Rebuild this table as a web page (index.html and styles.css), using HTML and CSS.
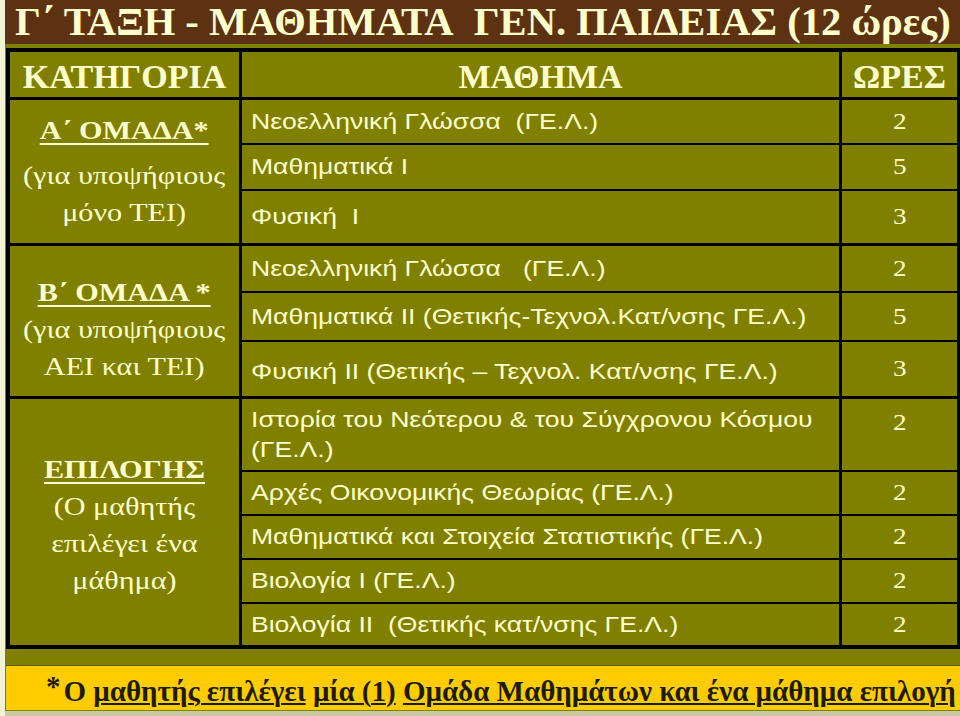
FILE: index.html
```html
<!DOCTYPE html>
<html lang="el">
<head>
<meta charset="utf-8">
<title>Γ΄ ΤΑΞΗ - ΜΑΘΗΜΑΤΑ ΓΕΝ. ΠΑΙΔΕΙΑΣ</title>
<link rel="stylesheet" href="styles.css">
</head>
<body>
<div class="slide">
  <div class="title">Γ΄ ΤΑΞΗ - ΜΑΘΗΜΑΤΑ&nbsp; ΓΕΝ. ΠΑΙΔΕΙΑΣ (12 ώρες)</div>
  <div class="main">
    <div class="table">
      <div class="group head">
        <div class="cell hcell">ΚΑΤΗΓΟΡΙΑ</div>
        <div class="cell hcell">ΜΑΘΗΜΑ</div>
        <div class="cell hcell">ΩΡΕΣ</div>
      </div>
      <div class="group ga">
        <div class="cell cat cat-a"><span class="wide"><span class="cat-title">Α΄ ΟΜΑΔΑ*</span><br><span class="cat-sub">(για υποψήφιους<br>μόνο ΤΕΙ)</span></span></div>
        <div class="cell lesson"><span class="wide">Νεοελληνική Γλώσσα&nbsp; (ΓΕ.Λ.)</span></div>
        <div class="cell hours"><span class="wide">2</span></div>
        <div class="cell lesson"><span class="wide">Μαθηματικά Ι</span></div>
        <div class="cell hours"><span class="wide">5</span></div>
        <div class="cell lesson"><span class="wide">Φυσική&nbsp; Ι</span></div>
        <div class="cell hours"><span class="wide">3</span></div>
      </div>
      <div class="group gb">
        <div class="cell cat cat-b"><span class="wide"><span class="cat-title">Β΄ ΟΜΑΔΑ *</span><br><span class="cat-sub">(για υποψήφιους<br>ΑΕΙ και ΤΕΙ)</span></span></div>
        <div class="cell lesson"><span class="wide">Νεοελληνική Γλώσσα&nbsp;&nbsp; (ΓΕ.Λ.)</span></div>
        <div class="cell hours"><span class="wide">2</span></div>
        <div class="cell lesson"><span class="wide">Μαθηματικά ΙΙ (Θετικής-Τεχνολ.Κατ/νσης ΓΕ.Λ.)</span></div>
        <div class="cell hours"><span class="wide">5</span></div>
        <div class="cell lesson low"><span class="wide">Φυσική ΙΙ (Θετικής – Τεχνολ. Κατ/νσης ΓΕ.Λ.)</span></div>
        <div class="cell hours"><span class="wide">3</span></div>
      </div>
      <div class="group ge">
        <div class="cell cat cat-e"><span class="wide"><span class="cat-title">ΕΠΙΛΟΓΗΣ</span><br><span class="cat-sub">(Ο μαθητής<br>επιλέγει ένα<br>μάθημα)</span></span></div>
        <div class="cell lesson"><span class="wide">Ιστορία του Νεότερου &amp; του Σύγχρονου Κόσμου<br>(ΓΕ.Λ.)</span></div>
        <div class="cell hours top"><span class="wide">2</span></div>
        <div class="cell lesson"><span class="wide">Αρχές Οικονομικής Θεωρίας (ΓΕ.Λ.)</span></div>
        <div class="cell hours"><span class="wide">2</span></div>
        <div class="cell lesson"><span class="wide">Μαθηματικά και Στοιχεία Στατιστικής (ΓΕ.Λ.)</span></div>
        <div class="cell hours"><span class="wide">2</span></div>
        <div class="cell lesson"><span class="wide">Βιολογία Ι (ΓΕ.Λ.)</span></div>
        <div class="cell hours"><span class="wide">2</span></div>
        <div class="cell lesson"><span class="wide">Βιολογία ΙΙ&nbsp; (Θετικής κατ/νσης ΓΕ.Λ.)</span></div>
        <div class="cell hours"><span class="wide">2</span></div>
      </div>
    </div>
    <div class="note"><span class="star">*</span>Ο <u>μαθητής επιλέγει</u> <u>μία (1)</u> <u>Ομάδα Μαθημάτων και ένα μάθημα επιλογή</u></div>
  </div>
</div>
</body>
</html>
```
FILE: styles.css
```css
html, body {
  margin: 0;
  padding: 0;
}
body {
  width: 960px;
  height: 716px;
  overflow: hidden;
  background: #c9c9a4;
  border-left: 5px solid #f3f3d6;
  box-sizing: border-box;
}
.slide {
  height: 711px;
  background: #808000;
  overflow: hidden;
}
.title {
  height: 44px;
  background: #5d3212;
  color: #ffffcc;
  font-family: "Liberation Serif", "Times New Roman", serif;
  font-weight: bold;
  font-size: 40.6px;
  line-height: 44px;
  padding-left: 10px;
  white-space: nowrap;
}
.main {
  padding: 4px 0 0 1px;
}
.table {
  display: flex;
  flex-direction: column;
  gap: 3px;
  background: #000;
  padding: 4px;
  width: 947px;
}
.group {
  display: grid;
  grid-template-columns: 229px 597px 115px;
  column-gap: 3px;
  row-gap: 2px;
}
.head { grid-template-rows: 45px; }
.ga { grid-template-rows: 43px 44px 52px; }
.gb { grid-template-rows: 45px 47px 54px; }
.ge { grid-template-rows: 71px 42px 42px 42px 41px; }
.cell {
  background: #808000;
  color: #ffffcc;
  display: flex;
  align-items: center;
}
.wide {
  display: inline-block;
  transform: scaleX(1.18);
  transform-origin: left center;
}
.hcell {
  justify-content: center;
  font-family: "Liberation Serif", "Times New Roman", serif;
  font-weight: bold;
  font-size: 34px;
  padding-top: 4px;
}
.cat {
  grid-column: 1;
  grid-row: 1 / -1;
  justify-content: center;
  text-align: center;
  font-family: "Liberation Serif", "Times New Roman", serif;
  font-size: 26px;
  line-height: 37px;
}
.cat .wide {
  transform: scaleX(1.16);
  transform-origin: center center;
}
.cat-title {
  font-weight: bold;
  text-decoration: underline;
  text-decoration-thickness: 2px;
  text-underline-offset: 4px;
}
.cat-a .cat-title { display: inline-block; margin-bottom: 8px; }
.cat-b { padding-top: 16px; }
.cat-e { padding-top: 6px; }
.lesson {
  grid-column: 2;
  font-family: "Liberation Sans", Arial, sans-serif;
  font-size: 22.5px;
  line-height: 30px;
  padding-left: 9px;
  white-space: nowrap;
}
.lesson.low { padding-top: 6px; }
.hours {
  grid-column: 3;
  justify-content: center;
  font-family: "Liberation Serif", "Times New Roman", serif;
  font-size: 23px;
}
.hours .wide {
  transform-origin: center center;
}
.hours.top {
  align-items: flex-start;
  padding-top: 11px;
}
.note {
  margin-top: 16px;
  height: 45px;
  background: #ffcc00;
  border-top: 1px solid #5a5a00;
  box-sizing: border-box;
  color: #1c1c00;
  font-family: "Liberation Serif", "Times New Roman", serif;
  font-weight: bold;
  font-size: 29px;
  line-height: 51px;
  padding-left: 40px;
  white-space: nowrap;
}
.note u {
  text-decoration-thickness: 2px;
  text-underline-offset: 2px;
}
.star {
  position: relative;
  top: -5px;
  padding-right: 3px;
}
```
